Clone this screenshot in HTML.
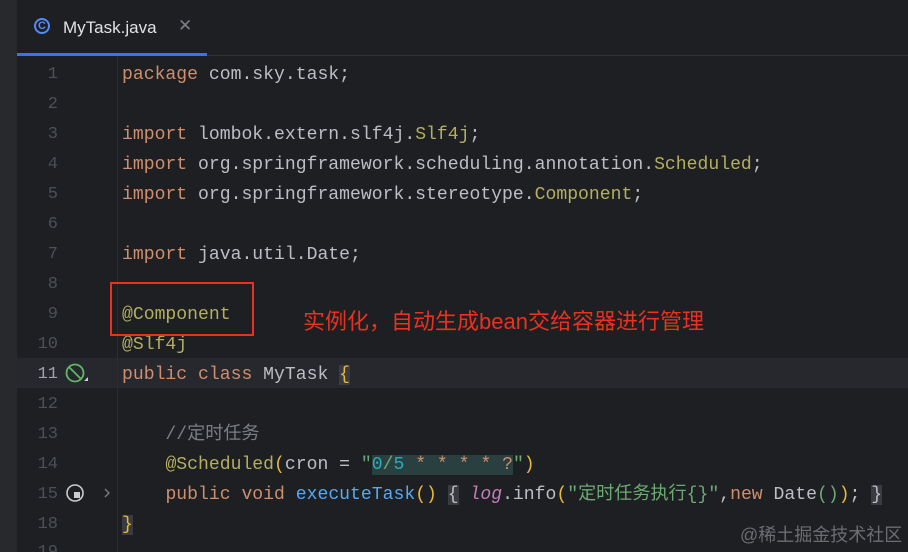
<!DOCTYPE html>
<html style="overflow:hidden;width:908px;height:552px"><head><meta charset="utf-8"><style>
body{margin:0;width:908px;height:552px;overflow:hidden;background:#1e1f22;position:relative;font-family:"Liberation Mono","Noto Sans CJK SC",monospace}
.strip{position:absolute;left:0;top:0;width:17px;height:552px;background:#27292c}
.tabbar{position:absolute;left:17px;top:0;right:0;height:55px;border-bottom:1px solid #2f3135}
.tab{position:absolute;left:17px;top:0;width:190px;height:53px;border-bottom:3px solid #3574f0}
.tabtxt{position:absolute;left:63px;top:18px;font:17px "Liberation Sans",sans-serif;color:#dfe1e5}
.x{position:absolute;left:178px;top:16px;font:17px "Liberation Sans",sans-serif;color:#7a7e85}
.ic{position:absolute;left:34px;top:18px;width:16px;height:16px;border:2px solid #548af7;border-radius:50%;box-sizing:border-box;color:#548af7;font:bold 11px "Liberation Sans",sans-serif;text-align:center;line-height:13px}
.cur{position:absolute;left:17px;right:0;top:358px;height:30px;background:#26282e}
.sep{position:absolute;left:117px;top:56px;width:1px;height:496px;background:#2b2d30}
.ln{position:absolute;left:20px;width:38px;text-align:right;color:#4b5059;font-size:17px;line-height:30px;margin-top:2px}
.code{position:absolute;left:122px;font-size:18.1px;line-height:30px;color:#bcbec4;white-space:pre;margin-top:2px}
.k{color:#cf8e6d}.a{color:#b3ae60}.m{color:#56a8f5}.s{color:#6aab73}.n{color:#2aacb8}.c{color:#7a7e85}.y{color:#e8ba36}.g{color:#6aab73}
.hl{background:#2a4040}.bb{background:#393b40}
</style></head><body>
<div class="strip"></div>
<div class="tabbar"></div>
<div class="tab"></div>
<div class="ic">C</div>
<div class="tabtxt">MyTask.java</div>
<div class="x">✕</div>
<div class="cur"></div>
<div class="sep"></div>
<div class="ln" style="top:58px">1</div>
<div class="ln" style="top:88px">2</div>
<div class="ln" style="top:118px">3</div>
<div class="ln" style="top:148px">4</div>
<div class="ln" style="top:178px">5</div>
<div class="ln" style="top:208px">6</div>
<div class="ln" style="top:238px">7</div>
<div class="ln" style="top:268px">8</div>
<div class="ln" style="top:298px">9</div>
<div class="ln" style="top:328px">10</div>
<div class="ln" style="top:358px;color:#a1a3ab">11</div>
<div class="ln" style="top:388px">12</div>
<div class="ln" style="top:418px">13</div>
<div class="ln" style="top:448px">14</div>
<div class="ln" style="top:478px">15</div>
<div class="ln" style="top:508px">18</div>
<div class="ln" style="top:536px;height:16px;overflow:hidden">19</div>
<svg style="position:absolute;left:64px;top:362px" width="26" height="24"><circle cx="11" cy="11" r="8.5" fill="none" stroke="#5fb865" stroke-width="1.8"/><line x1="5" y1="5" x2="17" y2="17" stroke="#5fb865" stroke-width="1.8"/><path d="M20 19 L24 19 L24 15 Z" fill="#ccc"/></svg>
<svg style="position:absolute;left:64px;top:482px" width="46" height="24"><circle cx="11" cy="11" r="8" fill="none" stroke="#ccc" stroke-width="1.6"/><rect x="10" y="10" width="6" height="6" fill="#ccc"/><path d="M41 7 L45 11 L41 15" fill="none" stroke="#7a7e85" stroke-width="1.3"/></svg>
<div class="code" style="top:58px"><span class="k">package</span> com.sky.task;</div>
<div class="code" style="top:118px"><span class="k">import</span> lombok.extern.slf4j.<span class="a">Slf4j</span>;</div>
<div class="code" style="top:148px"><span class="k">import</span> org.springframework.scheduling.annotation.<span class="a">Scheduled</span>;</div>
<div class="code" style="top:178px"><span class="k">import</span> org.springframework.stereotype.<span class="a">Component</span>;</div>
<div class="code" style="top:238px"><span class="k">import</span> java.util.Date;</div>
<div class="code" style="top:298px"><span class="a">@Component</span></div>
<div class="code" style="top:328px"><span class="a">@Slf4j</span></div>
<div class="code" style="top:358px"><span class="k">public class</span> MyTask <span class="y bb">{</span></div>
<div class="code" style="top:418px"><span class="c">    //定时任务</span></div>
<div class="code" style="top:448px">    <span class="a">@Scheduled</span><span class="y">(</span>cron = <span class="s">"</span><span class="hl"><span class="n">0</span><span class="s">/</span><span class="n">5</span> <span class="k">* * * * ?</span></span><span class="s">"</span><span class="y">)</span></div>
<div class="code" style="top:478px">    <span class="k">public void</span> <span class="m">executeTask</span><span class="y">()</span> <span class="bb">{</span> <i style="color:#c77dbb">log</i>.info<span class="y">(</span><span class="s">"定时任务执行{}"</span>,<span class="k">new</span> Date<span class="g">()</span><span class="y">)</span>; <span class="bb">}</span></div>
<div class="code" style="top:508px"><span class="y bb">}</span></div>
<div style="position:absolute;left:110px;top:282px;width:140px;height:50px;border:2px solid #e8321f"></div>
<div style="position:absolute;left:303px;top:304px;font:22px 'Liberation Sans','Noto Sans CJK SC',sans-serif;color:#e8321f;white-space:nowrap">实例化，自动生成bean交给容器进行管理</div>
<div style="position:absolute;left:740px;top:521px;font:18px 'Liberation Sans','Noto Sans CJK SC',sans-serif;color:#6b6d72;white-space:nowrap">@稀土掘金技术社区</div>
</body></html>
